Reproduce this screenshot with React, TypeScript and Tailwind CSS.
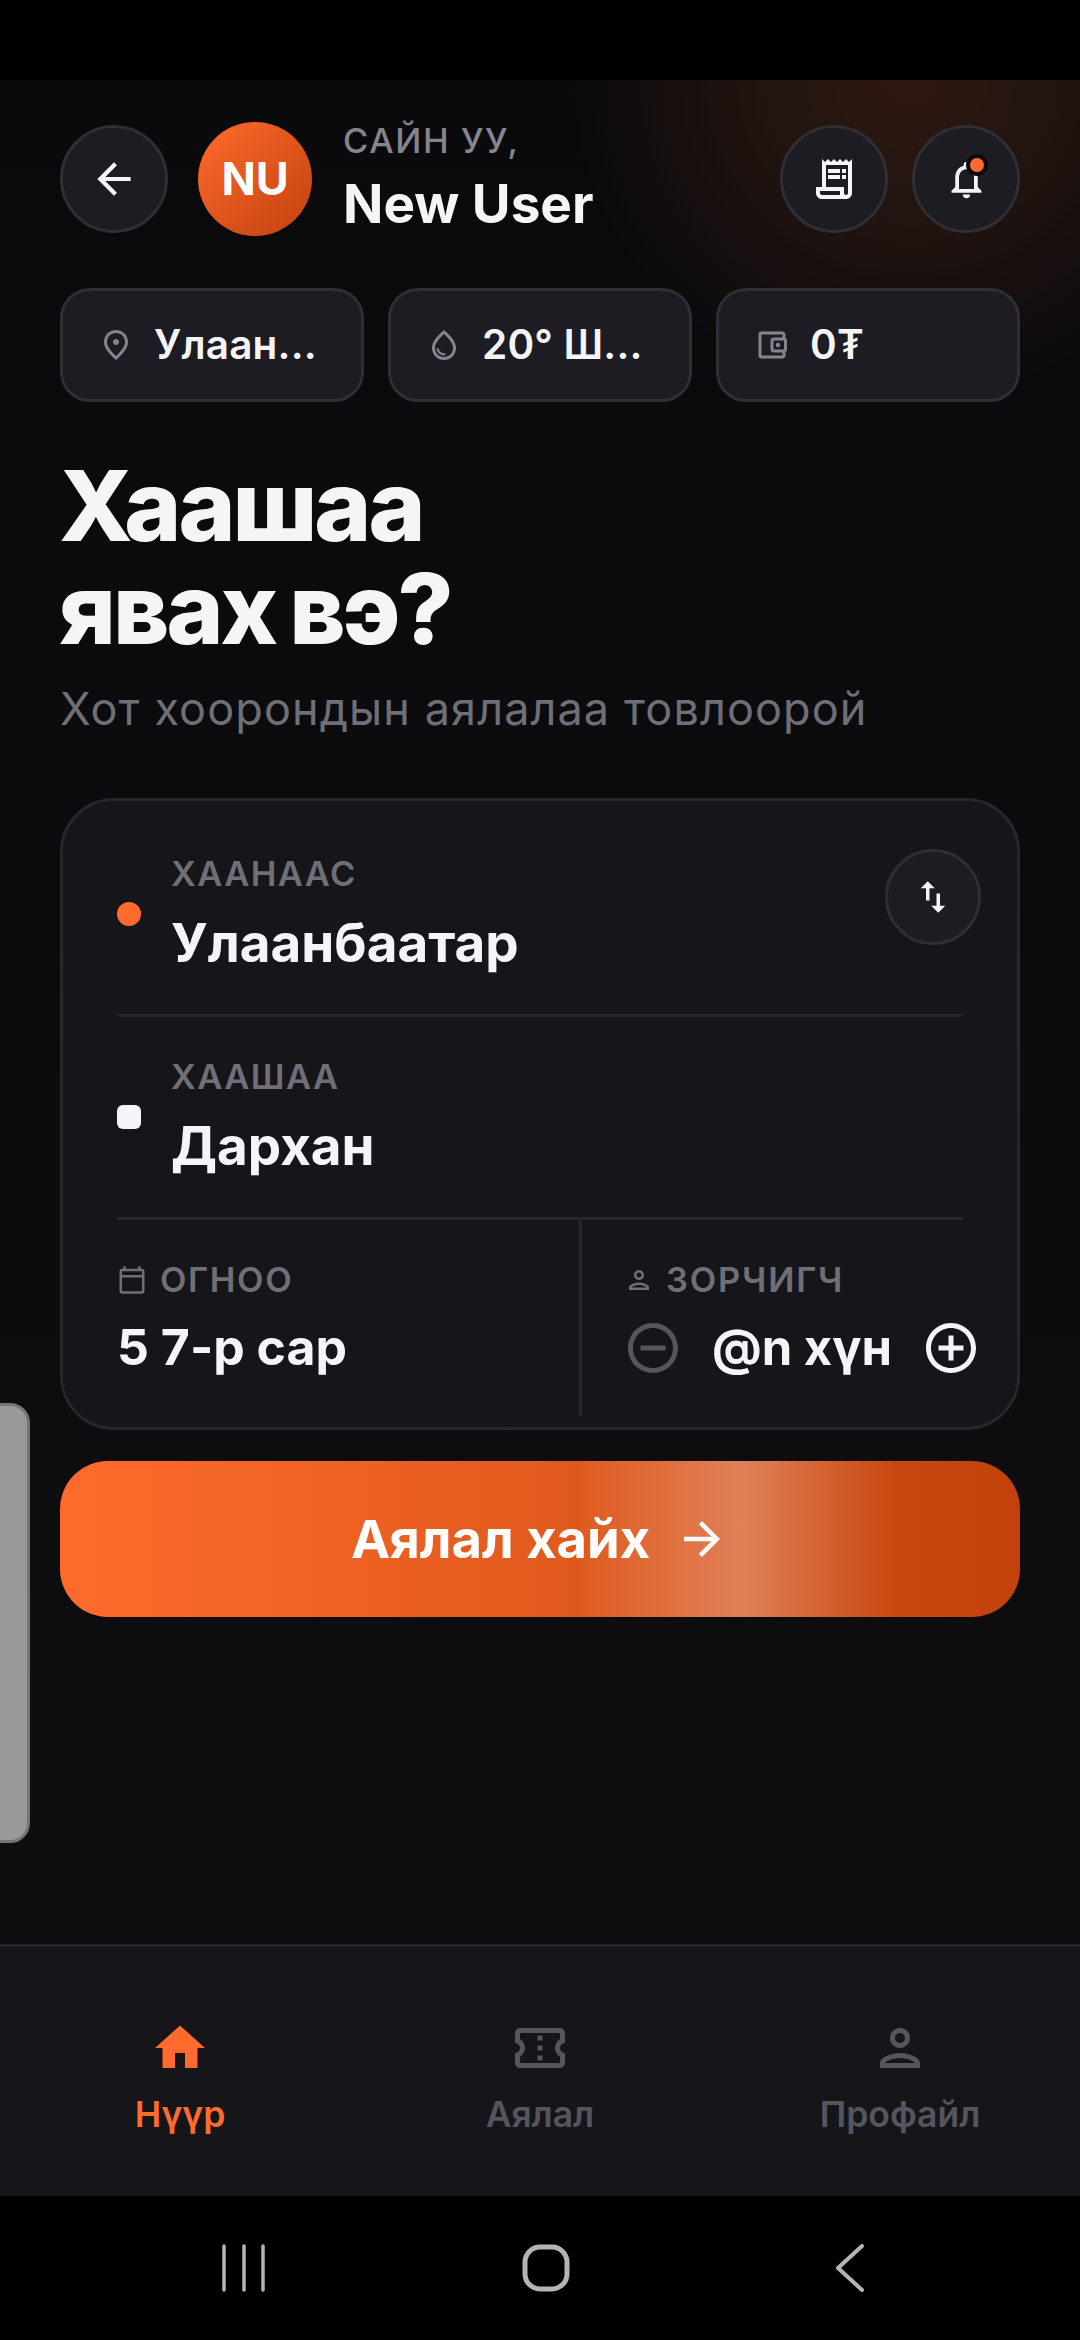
import type { ReactNode } from "react";
import {
  MdAddCircleOutline,
  MdArrowBack,
  MdArrowForward,
  MdHome,
  MdOutlineAccountBalanceWallet,
  MdOutlineCalendarToday,
  MdOutlineConfirmationNumber,
  MdOutlineNotifications,
  MdOutlinePerson,
  MdOutlinePlace,
  MdOutlineReceiptLong,
  MdOutlineWaterDrop,
  MdRemoveCircleOutline,
  MdSwapVert,
} from "react-icons/md";

function RoundButton({ children }: { children: ReactNode }) {
  return (
    <div className="relative flex h-[108px] w-[108px] shrink-0 items-center justify-center rounded-full border-[3px] border-[#2e2e34] bg-[#1c1c22] text-[#f5f5f7]">
      {children}
    </div>
  );
}

function Chip({ icon, label }: { icon: ReactNode; label: string }) {
  return (
    <div className="flex h-[114px] items-center gap-[20px] rounded-[30px] border-[3px] border-[#2e2e34] bg-[#1c1c22] pl-[35px] pr-[30px]">
      <span className="shrink-0 text-[#85858e]">{icon}</span>
      <span className="truncate text-[40.5px] leading-[48px] font-semibold tracking-[0.2px] text-[#f5f5f7]">{label}</span>
    </div>
  );
}

function Route({ label, value, dot }: { label: string; value: string; dot: ReactNode }) {
  return (
    <div className="flex h-[203px] items-center gap-[30px] border-b-[3px] border-[#26262c]">
      {dot}
      <div>
        <div className="text-[34.5px] leading-[40px] font-semibold tracking-[1.4px] text-[#6f6f78]">{label}</div>
        <div className="mt-[18px] text-[53px] leading-[62px] font-bold text-[#f5f5f7]">{value}</div>
      </div>
    </div>
  );
}

function NavItem({ icon, label, active }: { icon: ReactNode; label: string; active?: boolean }) {
  return (
    <div className={`flex flex-col items-center gap-[17px] ${active ? "text-[#ff6b2c]" : "text-[#55555e]"}`}>
      {icon}
      <span className="text-[35.5px] leading-[40px] font-semibold">{label}</span>
    </div>
  );
}

export default function App() {
  return (
    <div className="flex h-[2340px] w-[1080px] flex-col overflow-hidden bg-black font-['Inter',sans-serif]">
      <div className="h-[80px] shrink-0 bg-black" />

      <main className="relative flex-1 overflow-hidden bg-gradient-to-b from-[#0a0a0c] to-[#0e0e11] px-[60px] pt-[38px]">
        {/* warm glow behind the header buttons */}
        <div className="absolute right-[-170px] top-[-320px] h-[640px] w-[680px] bg-[radial-gradient(closest-side,rgba(255,107,44,0.145),rgba(255,107,44,0.1)_40%,rgba(255,107,44,0))]" />

        {/* edge panel handle */}
        <div className="absolute left-[-20px] top-[1323px] h-[440px] w-[50px] rounded-[20px] border-[3px] border-[#757575] bg-[#999999]" />

        <div className="relative">
          <header className="flex h-[122px] items-center">
            <RoundButton>
              <MdArrowBack size={50} />
            </RoundButton>
            <div className="ml-[30px] flex h-[114px] w-[114px] shrink-0 items-center justify-center rounded-full bg-gradient-to-br from-[#ff6b2c] to-[#c2410c] text-[45px] font-bold text-white">
              NU
            </div>
            <div className="ml-[31px] flex-1 pb-[2px]">
              <div className="text-[34.5px] leading-[40px] font-medium tracking-[1.6px] text-[#85858e]">САЙН УУ,</div>
              <div className="mt-[12px] text-[53px] leading-[62px] font-bold text-[#f5f5f7]">New User</div>
            </div>
            <div className="flex gap-[24px]">
              <RoundButton>
                <MdOutlineReceiptLong size={48} />
              </RoundButton>
              <RoundButton>
                <MdOutlineNotifications size={45} />
                <span className="absolute left-[51px] top-[26px] box-content h-[14px] w-[14px] rounded-full border-[4px] border-[#0a0a0c] bg-[#ff6b2c]" />
              </RoundButton>
            </div>
          </header>

          <div className="mt-[48px] grid grid-cols-3 gap-[24px]">
            <Chip icon={<MdOutlinePlace size={36} />} label="Улаан..." />
            <Chip icon={<MdOutlineWaterDrop size={36} />} label="20° Ш..." />
            <Chip icon={<MdOutlineAccountBalanceWallet size={36} />} label="0₮" />
          </div>

          <h1 className="mt-[52px] -ml-[1px] text-[97px] leading-[103px] font-extrabold tracking-[-3px] [word-spacing:-4px] text-[#f5f5f7]">
            Хаашаа
            <br />
            явах вэ?
          </h1>
          <p className="mt-[23px] text-[45px] leading-[52px] tracking-[1.1px] text-[#6f6f78]">Хот хоорондын аялалаа товлоорой</p>

          <section className="relative mt-[63px] h-[632px] rounded-[54px] border-[3px] border-[#26262c] bg-[#15151a] px-[54px] pt-[13px]">
            <Route label="ХААНААС" value="Улаанбаатар" dot={<span className="h-[24px] w-[24px] rounded-full bg-[#ff6b2c]" />} />
            <Route label="ХААШАА" value="Дархан" dot={<span className="h-[24px] w-[24px] rounded-[6px] bg-[#f5f5f7]" />} />

            <div className="absolute right-[36px] top-[48px]">
              <div className="flex h-[96px] w-[96px] items-center justify-center rounded-full border-[3px] border-[#2e2e34] bg-[#1c1c22] text-[#f5f5f7]">
                <MdSwapVert size={42} />
              </div>
            </div>

            <div className="flex h-[196px]">
              <div className="w-[465px] shrink-0 border-r-[3px] border-[#26262c] pt-[40px]">
                <div className="flex items-center gap-[13px] text-[34.5px] leading-[40px] font-semibold tracking-[1.6px] text-[#6f6f78]">
                  <MdOutlineCalendarToday size={30} />
                  ОГНОО
                </div>
                <div className="mt-[18px] text-[50px] leading-[58px] font-bold text-[#f5f5f7]">5 7-р сар</div>
              </div>
              <div className="pl-[41px] pt-[40px]">
                <div className="flex items-center gap-[12px] pl-[1px] text-[34.5px] leading-[40px] font-semibold tracking-[1.8px] text-[#6f6f78]">
                  <MdOutlinePerson size={30} />
                  ЗОРЧИГЧ
                </div>
                <div className="mt-[18px] flex w-[358px] items-center">
                  <MdRemoveCircleOutline size={60} className="shrink-0 text-[#55555e]" />
                  <span className="w-[238px] shrink-0 text-center text-[49px] leading-[58px] font-bold text-[#f5f5f7]">@n хүн</span>
                  <MdAddCircleOutline size={60} className="shrink-0 text-[#f5f5f7]" />
                </div>
              </div>
            </div>
          </section>

          <button
            type="button"
            className="mt-[31px] flex h-[156px] w-full items-center justify-center gap-[25px] rounded-[48px] bg-[linear-gradient(90deg,#ff6b2c_0%,#e0591c_54%,#df6229_57%,#e08058_71%,#c8480f_87%,#c2410c_100%)] text-[52.5px] font-bold text-white"
          >
            Аялал хайх
            <MdArrowForward size={54} />
          </button>
        </div>
      </main>

      <nav className="grid h-[252px] shrink-0 grid-cols-3 items-center border-t-[3px] border-[#26262c] bg-[#15151a] pt-[9px]">
        <NavItem active icon={<MdHome size={60} />} label="Нүүр" />
        <NavItem icon={<MdOutlineConfirmationNumber size={60} />} label="Аялал" />
        <NavItem icon={<MdOutlinePerson size={60} />} label="Профайл" />
      </nav>

      <div className="flex h-[144px] shrink-0 items-center bg-black pl-[222px] text-[#b4b4b4]">
        <svg width="44" height="48" viewBox="0 0 44 48" fill="none" stroke="currentColor" strokeWidth="3.5" strokeLinecap="round">
          <path d="M2 2v44M22 2v44M41 2v44" />
        </svg>
        <svg width="48" height="48" viewBox="0 0 48 48" fill="none" stroke="currentColor" strokeWidth="5" className="ml-[256px]">
          <rect x="3" y="3" width="42" height="42" rx="15" />
        </svg>
        <svg width="30" height="48" viewBox="0 0 30 48" fill="none" stroke="currentColor" strokeWidth="4" strokeLinecap="round" strokeLinejoin="round" className="ml-[265px]">
          <path d="M27 2 3 24l24 22" />
        </svg>
      </div>
    </div>
  );
}
